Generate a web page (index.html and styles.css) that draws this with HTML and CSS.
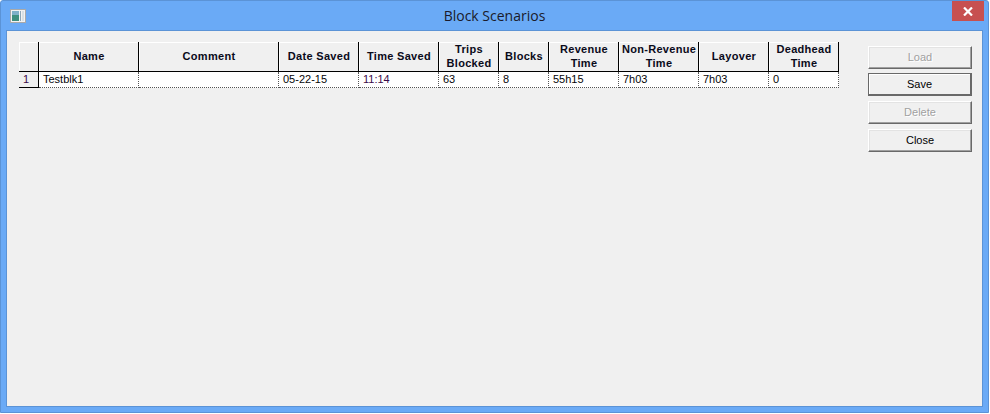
FILE: index.html
```html
<!DOCTYPE html>
<html lang="en-US">
    <head>
        <meta charset="UTF-8">
        <title>Block Scenarios</title>
        <link rel="stylesheet" href="styles.css">
    </head>
    <body>
        <div class="window">
            <div class="titlebar">
                <svg class="app-icon" width="16" height="14" viewBox="0 0 16 14">
                    <rect x="0.5" y="0.5" width="15" height="13" fill="#f2f2f2" stroke="#a9a9a9"/>
                    <rect x="2" y="2" width="7" height="10" fill="#3f8f7f"/>
                    <rect x="2" y="2" width="7" height="4" fill="#7fb0c8"/>
                    <rect x="10" y="2" width="1" height="10" fill="#8fa8b8"/>
                    <rect x="12" y="2" width="2" height="10" fill="#d8e0e4"/>
                </svg>
                <div class="title">Block Scenarios</div>
                <div class="close-box">
                    <svg width="10" height="9" viewBox="0 0 10 9">
                        <path d="M1 0.5 L9 8.5 M9 0.5 L1 8.5" stroke="#fff" stroke-width="2.2"/>
                    </svg>
                </div>
            </div>
            <div class="client">
                <table class="grid">
                    <thead>
                        <tr>
                            <th class="c-num"></th>
                            <th class="c-name">Name</th>
                            <th class="c-comment">Comment</th>
                            <th class="c-date">Date Saved</th>
                            <th class="c-time">Time Saved</th>
                            <th class="c-trips">Trips<br>Blocked</th>
                            <th class="c-blocks">Blocks</th>
                            <th class="c-rev">Revenue<br>Time</th>
                            <th class="c-nonrev">Non-Revenue<br>Time</th>
                            <th class="c-layover">Layover</th>
                            <th class="c-dead">Deadhead<br>Time</th>
                        </tr>
                    </thead>
                    <tbody>
                        <tr>
                            <td class="rownum">1</td>
                            <td>Testblk1</td>
                            <td></td>
                            <td>05-22-15</td>
                            <td class="purple">11:14</td>
                            <td>63</td>
                            <td>8</td>
                            <td>55h15</td>
                            <td>7h03</td>
                            <td>7h03</td>
                            <td>0</td>
                        </tr>
                    </tbody>
                </table>
                <div class="buttons">
                    <button class="btn" disabled>Load</button>
                    <button class="btn default">Save</button>
                    <button class="btn" disabled>Delete</button>
                    <button class="btn">Close</button>
                </div>
            </div>
        </div>
    </body>
</html>
```

FILE: styles.css
```css
html,body {
    margin: 0;
    padding: 0;
    background-color: #fff;
}
.window {
    box-sizing: border-box;
    width: 989px;
    height: 413px;
    display: flex;
    flex-direction: column;
    background-color: #6aaaf6;
    border: 1px solid #5b93d6;
    border-radius: 3px 3px 0 0;
    padding: 0 6px 6px;
}
.titlebar {
    height: 30px;
    flex: none;
    display: grid;
    grid-template-columns: 1fr auto 1fr;
    align-items: start;
}
.app-icon {
    margin: 8px 0 0 3px;
}
.title {
    font-family: "Open Sans", "Noto Sans", sans-serif;
    font-size: 14px;
    line-height: 30px;
    color: #1a1a2a;
}
.close-box {
    justify-self: end;
    width: 32px;
    height: 20px;
    margin-right: -2px;
    background-color: #c75050;
    display: flex;
    align-items: center;
    justify-content: center;
}
.client {
    flex: 1;
    display: flex;
    align-items: flex-start;
    background-color: #f0f0f0;
    outline: 1px solid #5b93d6;
    padding: 11px 9px 0 12px;
}
.grid {
    width: 820px;
    table-layout: fixed;
    border-collapse: separate;
    border-spacing: 0;
    font-family: "Liberation Sans", Arial, sans-serif;
    font-size: 11px;
    color: #000;
}
.grid th {
    box-sizing: border-box;
    height: 30px;
    padding: 0 0 1px 1px;
    font-size: 11px;
    line-height: 14px;
    font-weight: bold;
    letter-spacing: 0.3px;
    white-space: nowrap;
    text-align: center;
    background-color: #f0f0f0;
    border-right: 1px solid #000;
    border-bottom: 1px solid #000;
    box-shadow: inset 1px 1px 0 #fff;
    color: #0a0a1a;
}
.c-num { width: 20px; }
.c-name { width: 100px; }
.c-comment { width: 140px; }
.c-date { width: 80px; }
.c-time { width: 80px; }
.c-trips { width: 60px; }
.c-blocks { width: 50px; }
.c-rev { width: 70px; }
.c-nonrev { width: 80px; }
.c-layover { width: 70px; }
.c-dead { width: 70px; }
.grid td {
    box-sizing: border-box;
    height: 16px;
    padding: 0 0 1px 4px;
    line-height: 14px;
    background-color: #fff;
    border-right: 1px dotted #555;
    border-bottom: 1px dotted #555;
    color: #050508;
    white-space: nowrap;
}
.grid td.rownum {
    padding: 0 5px 1px 0;
    text-align: center;
    background-color: #f0f0f0;
    border-right: 1px solid #000;
    border-bottom: 1px solid #000;
    color: #3a0a4a;
}
.grid td.purple {
    color: #3a0a4a;
}
.buttons {
    margin: 4px 0 0 29px;
    display: flex;
    flex-direction: column;
    gap: 5px;
}
.btn {
    box-sizing: border-box;
    width: 104px;
    height: 23px;
    padding: 0 0 2px;
    font-family: "Liberation Sans", Arial, sans-serif;
    font-size: 11px;
    color: #000;
    background-color: #f0f0f0;
    border: 1px solid;
    border-color: #fff #696969 #696969 #fff;
    border-radius: 0;
    box-shadow: inset -1px -1px 0 #a0a0a0, inset 1px 1px 0 #e3e3e3;
}
.btn:first-child {
    margin-bottom: -1px;
}
.btn:disabled {
    color: #a0a0a0;
    text-shadow: 1px 1px 0 #fff;
}
.btn.default {
    padding: 0;
    border: 1px solid #696969;
    border-right-width: 2px;
    border-bottom-width: 2px;
    box-shadow: inset 1px 1px 0 #fff;
}
```
